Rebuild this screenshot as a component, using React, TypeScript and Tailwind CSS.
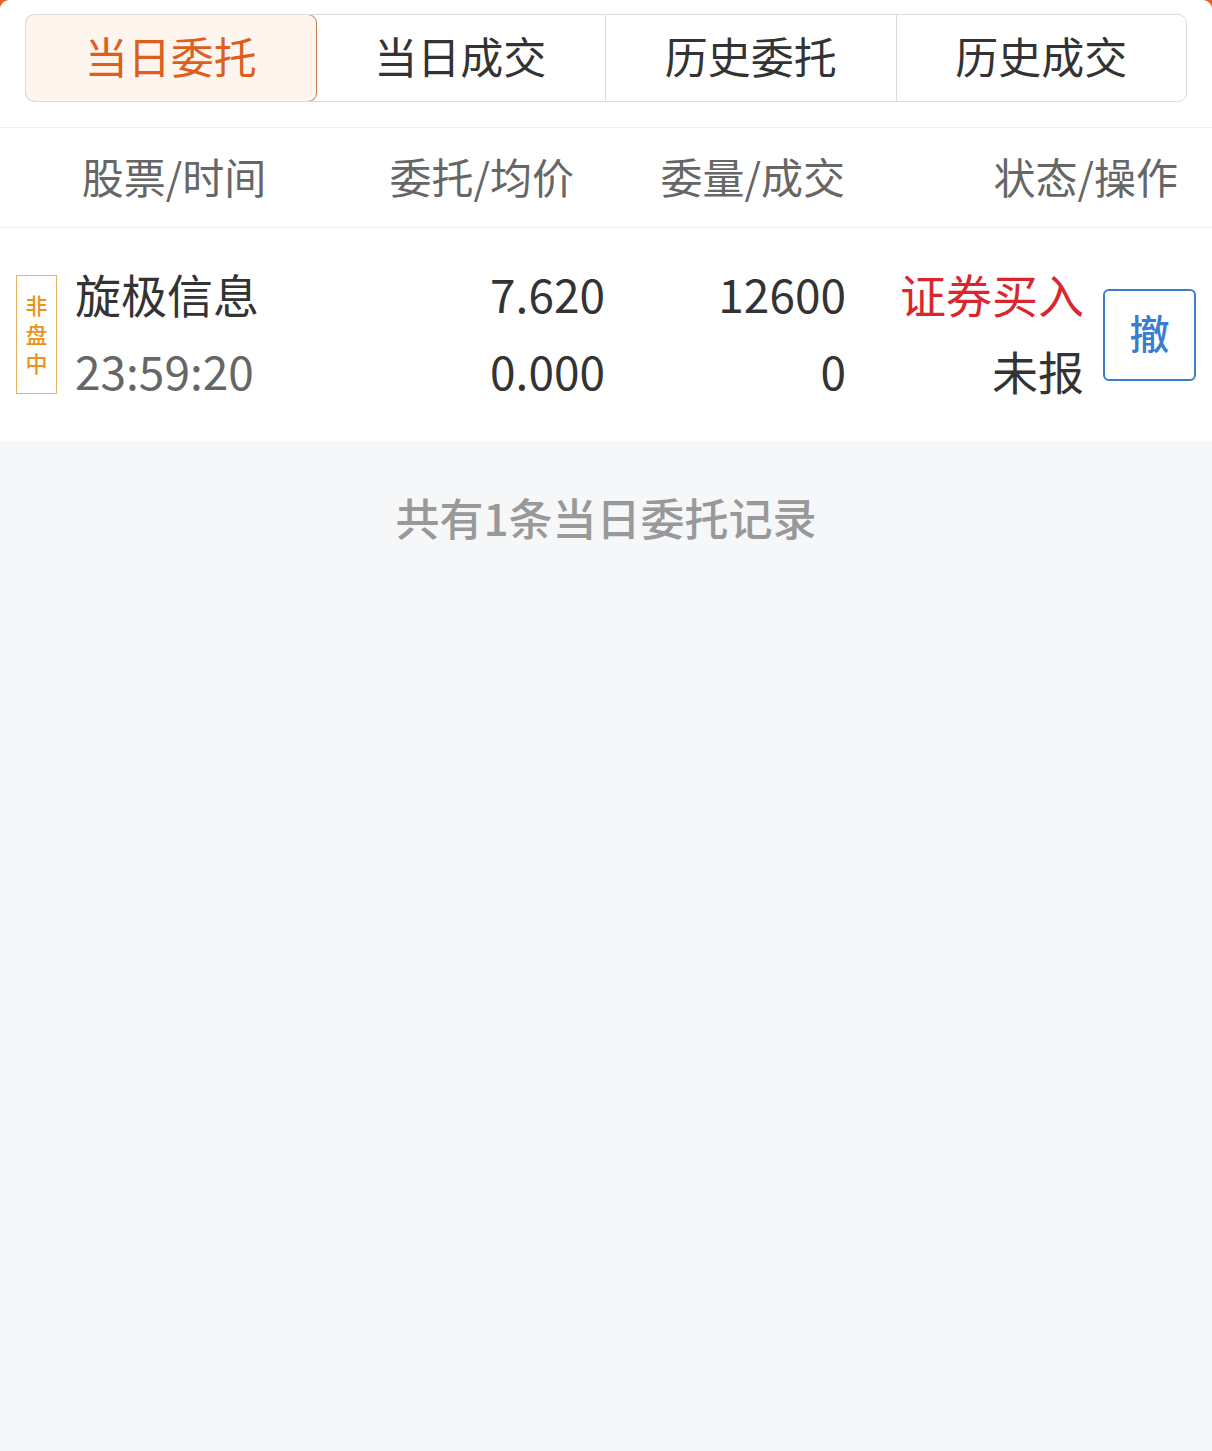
const TABS = ["当日委托", "当日成交", "历史委托", "历史成交"];

const FONT = "font-['Noto_Sans_CJK_SC','Noto_Sans',sans-serif]";

function Tabs() {
  return (
    <div className="flex h-[88px] overflow-hidden rounded-[9px] border border-[#dcdcdc]">
      {TABS.map((label, i) => (
        <div
          key={label}
          className={`flex flex-1 items-center justify-center pb-[5px] text-[43px] ${
            i === 0
              ? "-m-px rounded-[9px] border border-[#c9784a] bg-[#fff5ef] text-[#dd5f1b]"
              : "text-[#333] " + (i > 1 ? "border-l border-[#dcdcdc]" : "")
          }`}
        >
          {label}
        </div>
      ))}
    </div>
  );
}

export default function App() {
  return (
    <div className={`${FONT} min-h-[1451px] bg-[#f6f7f9]`}>
      <div className="bg-[#e5621e]">
        <div className="rounded-t-[9px] bg-white px-[25px] pt-[14px] pb-[25px]">
          <Tabs />
        </div>
      </div>

      <div className="flex h-[101px] items-center border-y border-[#f0f0f0] bg-white pb-[5px] text-[42px] text-[#666]">
        <div className="w-[348px] text-center">股票/时间</div>
        <div className="w-[226px] text-right">委托/均价</div>
        <div className="w-[271px] text-right">委量/成交</div>
        <div className="flex-1 pr-[34px] text-right">状态/操作</div>
      </div>

      <div className="flex h-[213px] items-center bg-white text-[46px] leading-[77px]">
        <div className="ml-[16px] flex h-[119px] w-[41px] flex-col items-center justify-center border border-[#e8b15c] pb-[2px] text-[22px] leading-[29px] font-medium text-[#e8941c]">
          <span>非</span>
          <span>盘</span>
          <span>中</span>
        </div>
        <div className="ml-[18px] w-[260px] pb-[5px]">
          <div className="text-[#333]">旋极信息</div>
          <div className="text-[#666]">23:59:20</div>
        </div>
        <div className="w-[270px] pb-[5px] text-right text-[#333]">
          <div>7.620</div>
          <div>0.000</div>
        </div>
        <div className="w-[241px] pb-[5px] text-right text-[#333]">
          <div>12600</div>
          <div>0</div>
        </div>
        <div className="w-[238px] pb-[5px] text-right">
          <div className="text-[#d9272e]">证券买入</div>
          <div className="text-[#333]">未报</div>
        </div>
        <div className="ml-[19px] flex h-[92px] w-[93px] items-center justify-center rounded-[6px] border-2 border-[#3a7cd0] pb-[4px] text-[40px] font-medium text-[#3a7cd0]">
          撤
        </div>
      </div>

      <div className="pt-[46px] text-center text-[44px] leading-[60px] font-medium text-[#999]">
        共有1条当日委托记录
      </div>
    </div>
  );
}
